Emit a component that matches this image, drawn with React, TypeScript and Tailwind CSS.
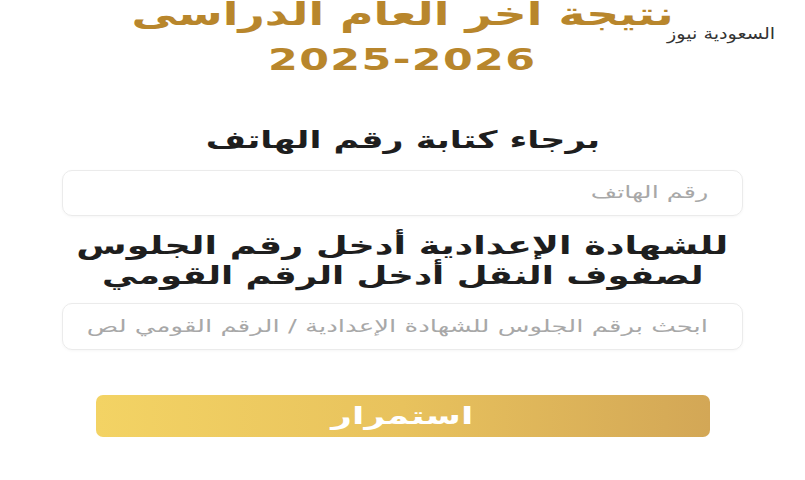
import React from "react";

export default function App() {
  const ar = { fontFamily: '"DejaVu Sans", "Noto Sans", sans-serif' };
  return (
    <div dir="rtl" className="w-[805px] h-[480px] bg-white overflow-hidden relative" style={ar}>
      <div className="absolute right-[30px] top-[25px] text-[16px] text-[#333] leading-[18px]">
        <span className="inline-block scale-x-[1.2] origin-right">السعودية نيوز</span>
      </div>
      <div className="flex flex-col items-center">
        <div className="mt-[-6px] h-[40px] text-[32px] font-bold text-[#b8862c] leading-[40px] whitespace-nowrap">
          <span className="inline-block scale-x-[1.43]">نتيجة اخر العام الدراسى</span>
        </div>
        <div dir="ltr" className="mt-[7px] h-[36px] text-[31px] font-bold text-[#b8862c] leading-[36px] tracking-[1px]">
          <span className="inline-block scale-x-[1.38]">2025-2026</span>
        </div>
        <div className="mt-[48px] text-[24px] font-bold text-[#1e1e1e] leading-[30px] whitespace-nowrap">
          <span className="inline-block scale-x-[1.45]">برجاء كتابة رقم الهاتف</span>
        </div>
        <div className="mt-[15px] w-[681px] h-[46px] rounded-[10px] border border-[#ebebeb] shadow-[0_1px_3px_rgba(0,0,0,0.04)] flex items-center px-[34px] text-[17px] text-[#a8a8a8] whitespace-nowrap">
          <span className="inline-block scale-x-[1.5] origin-right">رقم الهاتف</span>
        </div>
        <div className="mt-[15px] text-[25px] font-bold text-[#1e1e1e] leading-[30px] text-center whitespace-nowrap">
          <div><span className="inline-block scale-x-[1.46]">للشهادة الإعدادية أدخل رقم الجلوس</span></div>
          <div><span className="inline-block scale-x-[1.42]">لصفوف النقل أدخل الرقم القومي</span></div>
        </div>
        <div className="mt-[12px] w-[681px] h-[47px] rounded-[10px] border border-[#ebebeb] shadow-[0_1px_3px_rgba(0,0,0,0.04)] flex items-center px-[34px] text-[17px] text-[#a8a8a8] whitespace-nowrap overflow-hidden">
          <span className="inline-block scale-x-[1.53] origin-right">ابحث برقم الجلوس للشهادة الإعدادية / الرقم القومي لص</span>
        </div>
        <div className="mt-[45px] w-[614px] h-[42px] rounded-[7px] bg-gradient-to-l from-[#d3a756] via-[#e8c25d] to-[#f3d364] flex items-center justify-center text-white text-[24px] font-bold leading-none">
          <span className="inline-block scale-x-[1.5]">استمرار</span>
        </div>
      </div>
    </div>
  );
}
